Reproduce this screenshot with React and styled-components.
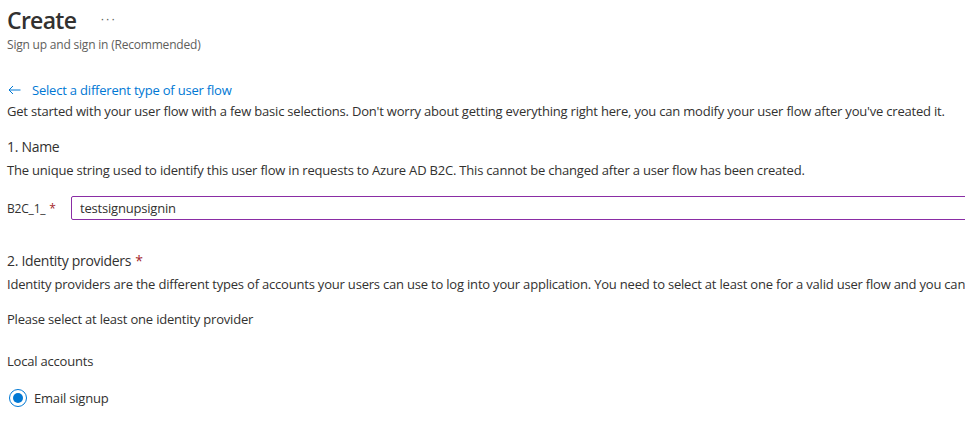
import React from "react"
import styled, { createGlobalStyle } from "styled-components"

const GlobalStyle = createGlobalStyle`
  html, body {
    margin: 0;
    padding: 0;
    background: #ffffff;
    overflow: hidden;
  }
  body {
    font-family: "Open Sans", "Noto Sans", sans-serif;
    color: #323130;
    font-size: 13px;
  }
`

const Page = styled.div`
  width: 965px;
  height: 436px;
  padding: 0 0 0 7px;
  box-sizing: border-box;
  overflow: hidden;
`

const Header = styled.div`
  display: flex;
  align-items: center;
  height: 40px;
`

const Title = styled.h1`
  margin: 0;
  font-size: 23px;
  font-weight: 600;
  letter-spacing: -0.7px;
  color: #323130;
`

const More = styled.button`
  margin-left: 24px;
  margin-top: -4px;
  border: none;
  background: none;
  padding: 0;
  color: #605e5c;
  font-size: 13px;
  letter-spacing: 1px;
  cursor: pointer;
`

const Subtitle = styled.div`
  font-size: 12px;
  color: #605e5c;
  letter-spacing: -0.2px;
  margin-top: -4px;
`

const BackLink = styled.a`
  display: flex;
  align-items: center;
  gap: 11px;
  margin-top: 28px;
  color: #0078d4;
  font-size: 13px;
  letter-spacing: -0.2px;
  text-decoration: none;
  svg {
    margin-left: 1px;
  }
`

const Text = styled.p`
  margin: ${({ $top }) => $top || 0}px 0 0 0;
  font-size: 13px;
  letter-spacing: -0.2px;
  white-space: nowrap;
  line-height: 18px;
`

const SectionTitle = styled.div`
  margin-top: ${({ $top }) => $top}px;
  font-size: 14px;
  letter-spacing: -0.3px;
  line-height: 20px;
`

const Required = styled.span`
  color: #a4262c;
  margin-left: 4px;
`

const FieldRow = styled.div`
  display: flex;
  align-items: center;
  margin-top: 17px;
`

const FieldLabel = styled.label`
  width: 64px;
  font-size: 12px;
  letter-spacing: -0.2px;
`

const Input = styled.input`
  flex: 1;
  height: 24px;
  margin-right: -10px;
  box-sizing: border-box;
  border: 1px solid #8a2da5;
  border-radius: 2px;
  padding: 0 8px;
  font-family: inherit;
  font-size: 13px;
  letter-spacing: -0.2px;
  color: #323130;
  outline: none;
`

const RadioRow = styled.label`
  display: flex;
  align-items: center;
  gap: 7px;
  margin-top: 19px;
  margin-left: 2px;
  font-size: 13px;
  letter-spacing: -0.2px;
`

const RadioCircle = styled.span`
  width: 18px;
  height: 18px;
  box-sizing: border-box;
  border-radius: 50%;
  border: 1px solid #0078d4;
  display: flex;
  align-items: center;
  justify-content: center;
  &::after {
    content: "";
    width: 10px;
    height: 10px;
    border-radius: 50%;
    background: #0078d4;
  }
`

export default function App() {
  return (
    <>
      <GlobalStyle />
      <Page>
        <Header>
          <Title>Create</Title>
          <More>···</More>
        </Header>
        <Subtitle>Sign up and sign in (Recommended)</Subtitle>
        <BackLink href="#">
          <svg width="13" height="10" viewBox="0 0 13 10" fill="none">
            <path d="M12.5 5H1M5 1L1 5l4 4" stroke="#0078d4" strokeWidth="1" />
          </svg>
          Select a different type of user flow
        </BackLink>
        <Text $top={3}>
          Get started with your user flow with a few basic selections. Don't worry about getting
          everything right here, you can modify your user flow after you've created it.
        </Text>
        <SectionTitle $top={17}>1. Name</SectionTitle>
        <Text $top={4}>
          The unique string used to identify this user flow in requests to Azure AD B2C. This
          cannot be changed after a user flow has been created.
        </Text>
        <FieldRow>
          <FieldLabel>
            B2C_1_<Required>*</Required>
          </FieldLabel>
          <Input defaultValue="testsignupsignin" />
        </FieldRow>
        <SectionTitle $top={31}>
          2. Identity providers<Required>*</Required>
        </SectionTitle>
        <Text $top={4}>
          Identity providers are the different types of accounts your users can use to log into
          your application. You need to select at least one for a valid user flow and you can
        </Text>
        <Text $top={17}>Please select at least one identity provider</Text>
        <Text $top={24}>Local accounts</Text>
        <RadioRow>
          <RadioCircle />
          Email signup
        </RadioRow>
      </Page>
    </>
  )
}
